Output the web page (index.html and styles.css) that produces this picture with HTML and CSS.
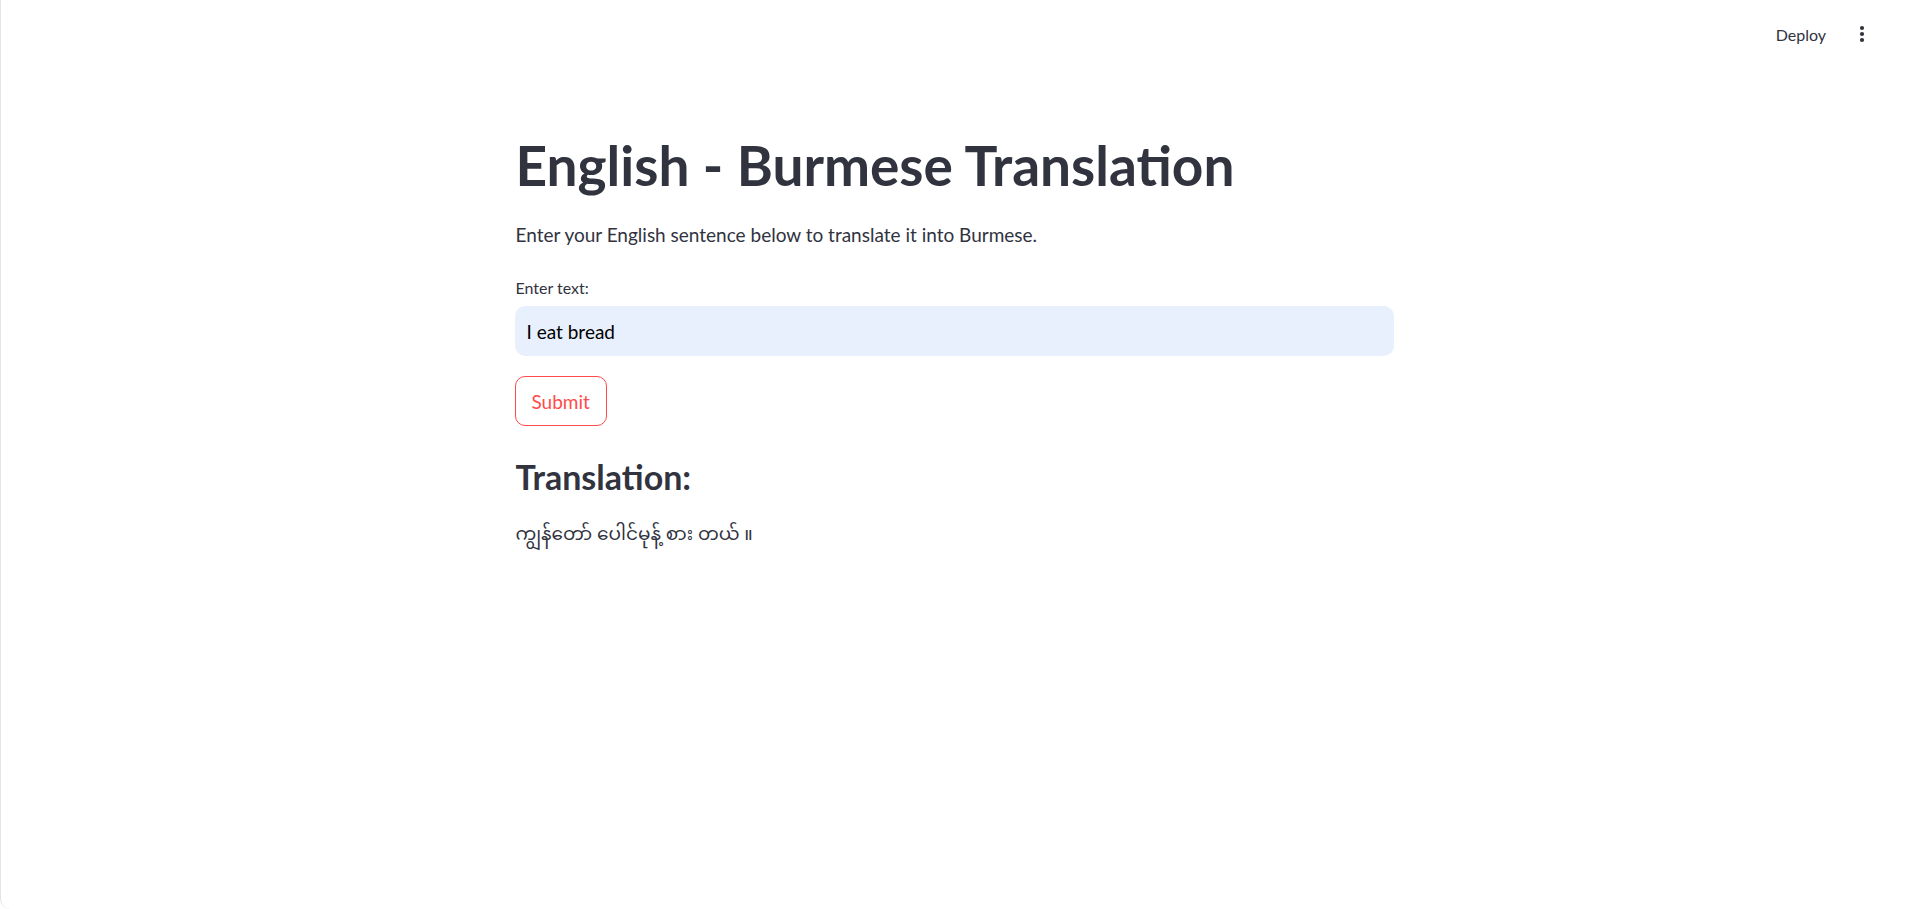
FILE: index.html
```html
<!DOCTYPE html>
<html lang="en">
<head>
<meta charset="utf-8">
<title>English - Burmese Translation</title>
<link rel="stylesheet" href="styles.css">
</head>
<body>
<div class="app">
  <header class="toolbar">
    <span class="deploy">Deploy</span>
    <span class="menu" aria-label="Main menu">
      <svg width="6" height="18" viewBox="0 0 6 18"><circle cx="3" cy="3" r="2.1"/><circle cx="3" cy="9" r="2.1"/><circle cx="3" cy="15" r="2.1"/></svg>
    </span>
  </header>
  <main class="main">
    <div class="block">
      <h1 class="title">English - Burmese Translation</h1>
      <p class="intro">Enter your English sentence below to translate it into Burmese.</p>
      <div class="field">
        <label class="label" for="txt">Enter text:</label>
        <input id="txt" class="input" type="text" value="I eat bread">
      </div>
      <button class="btn">Submit</button>
      <h3 class="subhead">Translation:</h3>
      <p class="result">ကျွန်တော် ပေါင်မုန့် စား တယ် ။</p>
    </div>
  </main>
</div>
</body>
</html>
```
FILE: styles.css
```css
html, body {
  margin: 0;
  padding: 0;
  height: 100%;
  background: #ffffff;
}
body {
  font-family: Lato, "Noto Sans", sans-serif;
  color: #31333f;
}
.app {
  height: 100%;
  box-sizing: border-box;
  border-left: 1px solid #e4e4e4;
  border-bottom-left-radius: 10px;
  display: flex;
  flex-direction: column;
}
.toolbar {
  height: 68px;
  display: flex;
  align-items: center;
  justify-content: flex-end;
  gap: 33px;
  padding-right: 42px;
  box-sizing: border-box;
}
.deploy {
  font-size: 16px;
  color: #31333f;
}
.menu {
  display: flex;
  fill: #31333f;
}
.main {
  display: flex;
  justify-content: center;
}
.block {
  width: 879px;
  display: flex;
  flex-direction: column;
  align-items: flex-start;
}
.title {
  margin: 64px 0 0 1px;
  font-size: 55px;
  font-weight: 700;
  line-height: 1.2;
  color: #31333f;
}
.intro {
  margin: 23px 0 0 1px;
  font-size: 19px;
  line-height: 1.5;
}
.field {
  width: 100%;
  display: flex;
  flex-direction: column;
  margin-top: 28px;
}
.label {
  font-size: 16px;
  line-height: 1.3;
  margin: 0 0 8px 1px;
}
.input {
  width: 100%;
  height: 50px;
  box-sizing: border-box;
  border: none;
  outline: none;
  border-radius: 10px;
  background: #e8f0fe;
  padding: 0 12px;
  font-family: inherit;
  font-size: 19px;
  color: #000;
}
.btn {
  margin-top: 20px;
  height: 50px;
  padding: 0 16px;
  border: 1px solid #ff4b4b;
  border-radius: 10px;
  background: #fff;
  color: #ff4b4b;
  font-family: inherit;
  font-size: 19px;
}
.subhead {
  margin: 31px 0 0 1px;
  font-size: 34px;
  font-weight: 700;
  line-height: 1.2;
}
.result {
  margin: 23px 0 0 1px;
  font-family: "Noto Sans Myanmar", Padauk, "Myanmar Text", "Noto Sans", sans-serif;
  font-size: 18.5px;
  line-height: 1.65;
}
```
